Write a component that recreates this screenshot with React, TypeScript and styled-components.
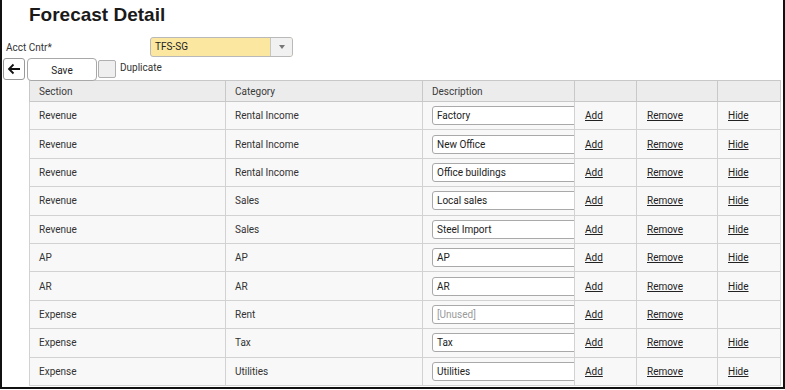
import styled, { createGlobalStyle } from "styled-components";

const GlobalStyle = createGlobalStyle`
  body {
    margin: 0;
    background: #ffffff;
    font-family: Roboto, "Liberation Sans", Arial, sans-serif;
  }
`;

const Frame = styled.div`
  box-sizing: border-box;
  width: 785px;
  height: 389px;
  border: 2px solid #111;
  border-top: none;
  overflow: hidden;
`;

const Title = styled.h1`
  margin: 0;
  padding: 4px 0 0 27px;
  height: 30px;
  box-sizing: border-box;
  font-family: "Liberation Sans", Arial, sans-serif;
  font-size: 19px;
  font-weight: bold;
  color: #1a1a1a;
`;

const FilterRow = styled.div`
  display: flex;
  align-items: center;
  height: 20px;
  margin-top: 7px;
`;

const FieldLabel = styled.label`
  width: 144px;
  padding-left: 4px;
  font-size: 10px;
  color: #333;
`;

const Select = styled.div`
  display: flex;
  width: 143px;
  height: 20px;
  box-sizing: border-box;
  border: 1px solid #b9b9b9;
  border-radius: 3px;
  background: #fce7a0;
  overflow: hidden;
`;

const SelectValue = styled.span`
  flex: 1;
  padding-left: 4px;
  line-height: 18px;
  font-size: 10px;
  color: #222;
`;

const SelectButton = styled.span`
  width: 21px;
  border-left: 1px solid #c6c6c6;
  background: #f1f1f1;
  display: flex;
  align-items: center;
  justify-content: center;
  &::after {
    content: "";
    border-left: 3px solid transparent;
    border-right: 3px solid transparent;
    border-top: 4px solid #777;
  }
`;

const ToolRow = styled.div`
  display: flex;
  align-items: center;
  gap: 2px;
  padding-left: 1px;
  height: 24px;
`;

const BackButton = styled.button`
  width: 22px;
  height: 22px;
  padding: 0;
  box-sizing: border-box;
  border: 1px solid #9a9a9a;
  border-radius: 3px;
  background: #fff;
  display: flex;
  align-items: center;
  justify-content: center;
`;

const SaveButton = styled.button`
  width: 70px;
  height: 23px;
  box-sizing: border-box;
  border: 1px solid #a8a8a8;
  border-radius: 4px;
  background: #fff;
  font-family: Roboto, "Liberation Sans", Arial, sans-serif;
  font-size: 10px;
  color: #222;
  padding-top: 3px;
`;

const Checkbox = styled.span`
  width: 16px;
  height: 16px;
  margin-left: -1px;
  border: 1px solid #b0b0b0;
  border-radius: 2px;
  background: #efefef;
`;

const CheckLabel = styled.span`
  margin-left: 2px;
  margin-top: -4px;
  font-size: 10px;
  color: #333;
`;

const Table = styled.table`
  margin-left: 27px;
  margin-top: -1px;
  width: 751px;
  border-collapse: collapse;
  table-layout: fixed;
  font-size: 10px;
  color: #333;
`;

const Col = styled.col<{ $w: number }>`
  width: ${(p) => p.$w}px;
`;

const Th = styled.th`
  height: 20px;
  padding: 0 0 0 9px;
  text-align: left;
  font-weight: normal;
  background: #ececec;
  border: 1px solid #c8c8c8;
  color: #3a3a3a;
`;

const Td = styled.td<{ $pad?: number }>`
  height: 27.4px;
  padding: 0 0 0 ${(p) => p.$pad ?? 9}px;
  background: #f8f8f8;
  border: 1px solid #d2d2d2;
  overflow: hidden;
  white-space: nowrap;
`;

const DescInput = styled.input`
  width: 160px;
  height: 19px;
  box-sizing: border-box;
  padding: 0 4px;
  border: 1px solid #a9a9a9;
  border-radius: 3px;
  background: #fff;
  font-family: Roboto, "Liberation Sans", Arial, sans-serif;
  font-size: 10px;
  color: #222;
  &::placeholder {
    color: #9a9a9a;
  }
`;

const Link = styled.a`
  color: #222;
  text-decoration: underline;
  font-size: 10px;
`;

const rows = [
  { section: "Revenue", category: "Rental Income", desc: "Factory", hide: true },
  { section: "Revenue", category: "Rental Income", desc: "New Office", hide: true },
  { section: "Revenue", category: "Rental Income", desc: "Office buildings", hide: true },
  { section: "Revenue", category: "Sales", desc: "Local sales", hide: true },
  { section: "Revenue", category: "Sales", desc: "Steel Import", hide: true },
  { section: "AP", category: "AP", desc: "AP", hide: true },
  { section: "AR", category: "AR", desc: "AR", hide: true },
  { section: "Expense", category: "Rent", desc: "", hide: false },
  { section: "Expense", category: "Tax", desc: "Tax", hide: true },
  { section: "Expense", category: "Utilities", desc: "Utilities", hide: true },
];

export default function App() {
  return (
    <>
      <GlobalStyle />
      <Frame>
        <Title>Forecast Detail</Title>
        <FilterRow>
          <FieldLabel>Acct Cntr*</FieldLabel>
          <Select>
            <SelectValue>TFS-SG</SelectValue>
            <SelectButton />
          </Select>
        </FilterRow>
        <ToolRow>
          <BackButton>
            <svg width="14" height="12" viewBox="0 0 14 12">
              <path d="M13 6H2M6.5 1.5L2 6l4.5 4.5" stroke="#111" strokeWidth="1.8" fill="none" />
            </svg>
          </BackButton>
          <SaveButton>Save</SaveButton>
          <Checkbox />
          <CheckLabel>Duplicate</CheckLabel>
        </ToolRow>
        <Table>
          <colgroup>
            <Col $w={196} />
            <Col $w={197} />
            <Col $w={152} />
            <Col $w={62} />
            <Col $w={81} />
            <Col $w={63} />
          </colgroup>
          <thead>
            <tr>
              <Th>Section</Th>
              <Th>Category</Th>
              <Th>Description</Th>
              <Th></Th>
              <Th></Th>
              <Th></Th>
            </tr>
          </thead>
          <tbody>
            {rows.map((r, i) => (
              <tr key={i}>
                <Td>{r.section}</Td>
                <Td>{r.category}</Td>
                <Td $pad={9}>
                  <DescInput defaultValue={r.desc} placeholder="[Unused]" />
                </Td>
                <Td $pad={10}>
                  <Link>Add</Link>
                </Td>
                <Td $pad={10}>
                  <Link>Remove</Link>
                </Td>
                <Td $pad={10}>{r.hide && <Link>Hide</Link>}</Td>
              </tr>
            ))}
          </tbody>
        </Table>
      </Frame>
    </>
  );
}
